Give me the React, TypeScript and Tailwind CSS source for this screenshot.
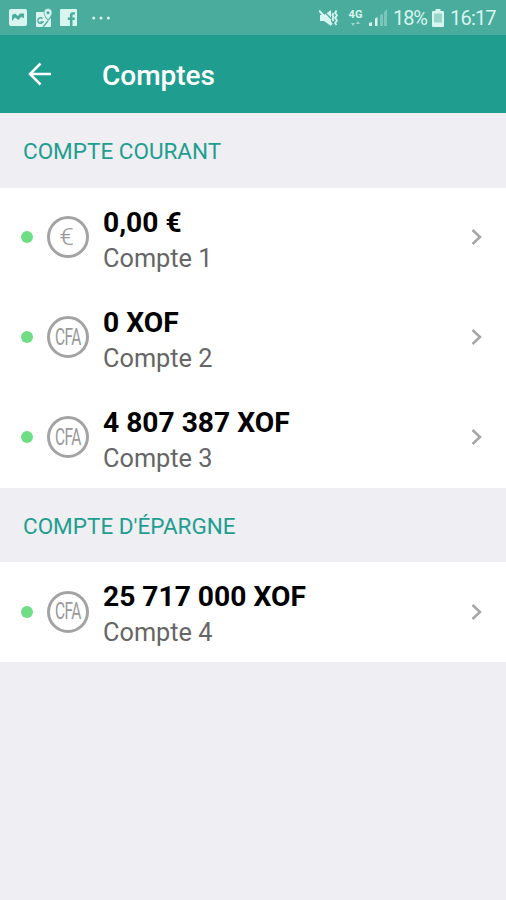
import React from 'react';

interface Account {
  name: string;
  amount: string;
  currency: 'EUR' | 'XOF';
}

interface AccountGroup {
  title: string;
  accounts: Account[];
}

const groups: AccountGroup[] = [
  {
    title: 'Compte courant',
    accounts: [
      { name: 'Compte 1', amount: '0,00 €', currency: 'EUR' },
      { name: 'Compte 2', amount: '0 XOF', currency: 'XOF' },
      { name: 'Compte 3', amount: '4 807 387 XOF', currency: 'XOF' },
    ],
  },
  {
    title: "Compte d'épargne",
    accounts: [{ name: 'Compte 4', amount: '25 717 000 XOF', currency: 'XOF' }],
  },
];

function StatusBar() {
  return (
    <div className="flex h-[35px] items-center bg-[#4aac9d] px-[9px] text-[#d8f5ef]">
      <svg className="h-[17px] w-[18px]" viewBox="0 0 18 17">
        <path d="M2 0h14a2 2 0 0 1 2 2v13a2 2 0 0 1-2 2H2a2 2 0 0 1-2-2V2a2 2 0 0 1 2-2z" fill="currentColor" />
        <path d="M3 12V6l3-1.500L9 7l2-2.500h4V9l-3-1-2.500 3L6 8.500z" fill="#4aac9d" />
      </svg>
      <svg className="ml-[8px] h-[20px] w-[18px]" viewBox="0 0 18 20">
        <path d="M2 4h7l1 5 3 4 2-2 1-1v8a1 1 0 0 1-1 1H2a1 1 0 0 1-1-1V5a1 1 0 0 1 1-1z" fill="currentColor" />
        <path d="M7.500 10.500a2.800 2.800 0 1 0 .5 3.500H5.500" fill="none" stroke="#4aac9d" strokeWidth="1.400" />
        <path d="M8 19l5-6" stroke="#4aac9d" strokeWidth="1.200" />
        <path d="M13 .5a4 4 0 0 1 4 4c0 3-4 7.500-4 7.500S9 7.500 9 4.500a4 4 0 0 1 4-4z" fill="currentColor" stroke="#4aac9d" strokeWidth="0.6" />
        <circle cx="13" cy="4.700" r="1.500" fill="#4aac9d" />
      </svg>
      <svg className="ml-[7px] h-[17px] w-[17px]" viewBox="0 0 17 17">
        <path d="M1 0h15a1 1 0 0 1 1 1v15a1 1 0 0 1-1 1h-3.500v-6h2.200l.3-2.500h-2.500V6.700c0-.8.300-1.200 1.200-1.200H15V3.200h-2c-2 0-3.100 1.200-3.100 3.200v2.100H7.800V11h2.100v6H1a1 1 0 0 1-1-1V1a1 1 0 0 1 1-1z" fill="currentColor" />
      </svg>
      <svg className="ml-[15px] h-[4px] w-[18px]" viewBox="0 0 18 4" fill="currentColor">
        <circle cx="1.700" cy="2" r="1.500" />
        <circle cx="9" cy="2" r="1.500" />
        <circle cx="16.300" cy="2" r="1.500" />
      </svg>

      <div className="ml-auto flex items-center">
        <svg className="h-[18px] w-[20px]" viewBox="0 0 20 18" fill="none" stroke="currentColor">
          <path d="M1 6h4l7-5v16l-7-5H1z" fill="currentColor" stroke="none" />
          <path d="M3 0l13 14" stroke="#4aac9d" strokeWidth="1.200" />
          <path d="M0 1.500l13 14" strokeWidth="2" />
          <path d="M14.500 4L13.500 6l1 2-1 2 1 2M17.500 1.500l-1.300 2.500 1.800 2.500-1.800 2.500 1.800 2.500-1.800 2.500 1.300 2" strokeWidth="1.800" />
        </svg>
        <div className="ml-[9px] flex w-[15px] flex-col items-center">
          <span className="text-[11px] leading-[10px] font-bold">4G</span>
          <svg className="mt-px h-[5px] w-[9px] opacity-60" viewBox="0 0 9 5" fill="currentColor">
            <path d="M0 2h4L2 5zM5 3h4L7 0z" />
          </svg>
        </div>
        <svg className="ml-[6px] h-[17px] w-[18px]" viewBox="0 0 18 17" fill="currentColor">
          <path d="M0 14l3-1v4H0zM6 9.500L8.500 8v9H6z" />
          <path d="M11 6l3-1.500V17h-3zM15 3l3-3v17h-3z" opacity="0.350" />
        </svg>
        <span className="ml-[6px] w-[34px] whitespace-nowrap text-[20px] leading-none tracking-[-1.100px]">18%</span>
        <svg className="ml-[5px] h-[18px] w-[12px]" viewBox="0 0 12 18">
          <path d="M3.500 0h5v2H11a1 1 0 0 1 1 1v14a1 1 0 0 1-1 1H1a1 1 0 0 1-1-1V3a1 1 0 0 1 1-1h2.500z" fill="currentColor" />
          <path d="M2 4.500h8v9H2z" fill="#4aac9d" opacity="0.450" />
        </svg>
        <span className="ml-[6px] w-[47px] whitespace-nowrap text-[20px] leading-none tracking-[-0.8px]">16:17</span>
      </div>
    </div>
  );
}

function Header() {
  return (
    <header className="flex h-[78px] items-center bg-[#1f9e90] pl-[28px] text-white">
      <svg className="h-[24px] w-[24px]" viewBox="0 0 24 24" fill="none" stroke="currentColor" strokeWidth="2.500">
        <path d="M23 12H2.500M12.500 1.500L2 12l10.500 10.500" />
      </svg>
      <h1 className="ml-[50px] pt-[3px] text-[28px] leading-none font-medium">Comptes</h1>
    </header>
  );
}

function CurrencyIcon({ currency }: { currency: Account['currency'] }) {
  return (
    <div className="ml-[14px] flex h-[42px] w-[42px] shrink-0 items-center justify-center rounded-full border-[3px] border-[#a3a3a3] text-[#999999]">
      {currency === 'EUR' ? (
        <span className="mr-[2px] scale-x-110 text-[24px] leading-none font-light">€</span>
      ) : (
        <span className="scale-y-[1.550] pt-[1px] text-[15.500px] leading-none tracking-[-0.5px]">CFA</span>
      )}
    </div>
  );
}

function AccountRow({ account }: { account: Account }) {
  return (
    <div className="flex h-[100px] items-center bg-white pr-[24px] pb-[1px] pl-[21px]">
      <span className="h-[12px] w-[12px] shrink-0 rounded-full bg-[#6fdd83]" />
      <CurrencyIcon currency={account.currency} />
      <div className="ml-[14px] flex flex-col pt-[7px]">
        <span className="text-[28.200px] leading-[36px] font-bold text-black">{account.amount}</span>
        <span className="text-[25.300px] leading-[36px] text-[#666666]">{account.name}</span>
      </div>
      <svg className="ml-auto h-[16px] w-[11px]" viewBox="0 0 11 16" fill="none" stroke="#a6a6a6" strokeWidth="2.500">
        <path d="M1.500 1L9 8l-7.500 7" />
      </svg>
    </div>
  );
}

export default function App() {
  return (
    <div className="min-h-screen w-full bg-[#eeeef3] font-[Roboto,sans-serif]">
      <StatusBar />
      <Header />
      {groups.map((group) => (
        <section key={group.title}>
          <h2 className="flex h-[74.500px] items-center pt-[2px] pl-[23px] text-[22.500px] leading-none text-[#1f9e90] uppercase">
            {group.title}
          </h2>
          {group.accounts.map((account) => (
            <AccountRow key={account.name} account={account} />
          ))}
        </section>
      ))}
    </div>
  );
}
